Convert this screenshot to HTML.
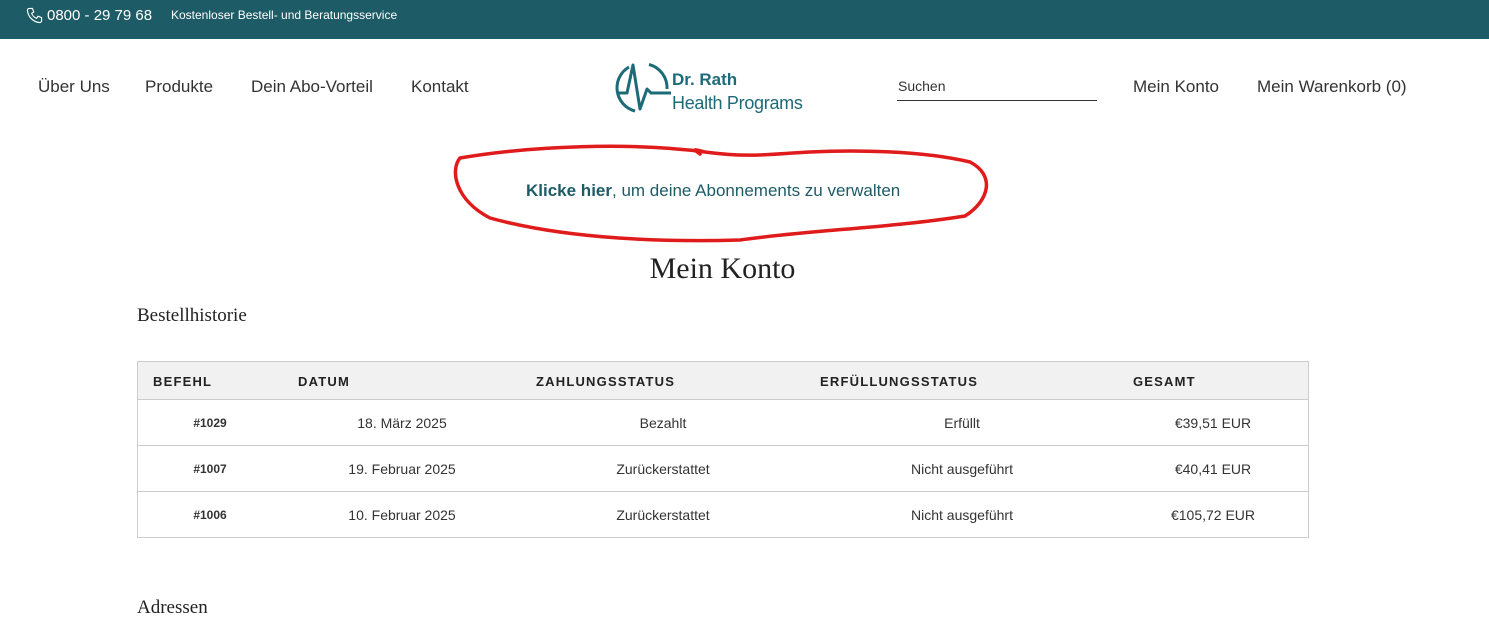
<!DOCTYPE html>
<html><head><meta charset="utf-8"><style>
*{margin:0;padding:0;box-sizing:border-box}
body{width:1489px;height:636px;overflow:hidden;background:#fff;font-family:"Liberation Sans",sans-serif;color:#333;position:relative}
.a{position:absolute;white-space:nowrap}
.top{position:absolute;left:0;top:0;width:1489px;height:39px;background:#1d5b66;color:#fff}
.nav{font-size:17px;color:#333;top:77px}
.th{font-size:13px;font-weight:bold;letter-spacing:1.2px;color:#222;top:374px}
.td{font-size:14px;color:#333;transform:translateX(-50%)}
.serif{font-family:"Liberation Serif",serif}
</style></head><body>
<div class="top">
<svg class="a" style="left:26px;top:7px" width="17" height="17" viewBox="0 0 24 24" fill="none" stroke="#fff" stroke-width="1.6"><path d="M5 2h4l2 5-3 2c1 3 4 6 7 7l2-3 5 2v4c0 2-1 3-3 3C10 21 3 14 2 5c0-2 1-3 3-3z"/></svg>
<div class="a" style="left:47px;top:7px;font-size:15px">0800 - 29 79 68</div>
<div class="a" style="left:171px;top:8px;font-size:12px">Kostenloser Bestell- und Beratungsservice</div>
</div>
<div class="a nav" style="left:38px">Über Uns</div>
<div class="a nav" style="left:145px">Produkte</div>
<div class="a nav" style="left:251px">Dein Abo-Vorteil</div>
<div class="a nav" style="left:411px">Kontakt</div>
<svg class="a" style="left:615px;top:61px" width="60" height="54" viewBox="0 0 60 54" fill="none" stroke="#1d6b78" stroke-width="3">
<path d="M14 6A24 24 0 0 0 20 50"/><path d="M34 3.5A24 24 0 0 1 52 28"/>
<path d="M2 32h10l6-28 7 44 7-20 4 4h20" stroke-width="3" stroke-linejoin="round"/></svg>
<div class="a" style="left:672px;top:70px;font-size:17px;font-weight:bold;color:#1d6b78">Dr. Rath</div>
<div class="a" style="left:672px;top:93px;font-size:18px;color:#1d6b78;letter-spacing:-0.3px">Health Programs</div>
<div class="a" style="left:898px;top:78px;font-size:14px;color:#333">Suchen</div>
<div class="a" style="left:897px;top:100px;width:200px;height:1px;background:#333"></div>
<div class="a nav" style="left:1133px">Mein Konto</div>
<div class="a nav" style="left:1257px">Mein Warenkorb (0)</div>
<svg class="a" style="left:450px;top:140px" width="545" height="108" viewBox="0 0 545 108" fill="none" stroke="#e01b1b" stroke-width="3.5" stroke-linecap="round">
<path d="M255 12C180 2 80 6 10 18C0 30 5 60 40 78C120 100 220 102 290 100C360 90 440 88 515 76C540 60 545 35 520 22C470 10 400 10 360 12C320 14 300 18 255 12C240 8 245 10 250 14"/></svg>
<div class="a" style="left:526px;top:181px;font-size:17px;color:#1d5b66"><b>Klicke hier</b>, um deine Abonnements zu verwalten</div>
<div class="a serif" style="left:0;width:1445px;text-align:center;top:252px;font-size:30px;color:#222">Mein Konto</div>
<div class="a serif" style="left:137px;top:305px;font-size:19px;color:#222">Bestellhistorie</div>
<div class="a" style="left:137px;top:361px;width:1172px;height:177px;border:1px solid #ccc"></div>
<div class="a" style="left:138px;top:362px;width:1170px;height:38px;background:#f1f1f1;border-bottom:1px solid #ccc"></div>
<div class="a" style="left:138px;top:445px;width:1170px;height:1px;background:#ccc"></div>
<div class="a" style="left:138px;top:491px;width:1170px;height:1px;background:#ccc"></div>
<div class="a th" style="left:153px">BEFEHL</div>
<div class="a th" style="left:298px">DATUM</div>
<div class="a th" style="left:536px">ZAHLUNGSSTATUS</div>
<div class="a th" style="left:820px">ERFÜLLUNGSSTATUS</div>
<div class="a th" style="left:1133px">GESAMT</div>
<div class="a td" style="left:210px;top:416px;font-size:12px;font-weight:bold">#1029</div>
<div class="a td" style="left:402px;top:415px">18. März 2025</div>
<div class="a td" style="left:663px;top:415px">Bezahlt</div>
<div class="a td" style="left:962px;top:415px">Erfüllt</div>
<div class="a td" style="left:1213px;top:415px">€39,51 EUR</div>
<div class="a td" style="left:210px;top:462px;font-size:12px;font-weight:bold">#1007</div>
<div class="a td" style="left:402px;top:461px">19. Februar 2025</div>
<div class="a td" style="left:663px;top:461px">Zurückerstattet</div>
<div class="a td" style="left:962px;top:461px">Nicht ausgeführt</div>
<div class="a td" style="left:1213px;top:461px">€40,41 EUR</div>
<div class="a td" style="left:210px;top:508px;font-size:12px;font-weight:bold">#1006</div>
<div class="a td" style="left:402px;top:507px">10. Februar 2025</div>
<div class="a td" style="left:663px;top:507px">Zurückerstattet</div>
<div class="a td" style="left:962px;top:507px">Nicht ausgeführt</div>
<div class="a td" style="left:1213px;top:507px">€105,72 EUR</div>
<div class="a serif" style="left:137px;top:597px;font-size:19px;color:#222">Adressen</div>
</body></html>
